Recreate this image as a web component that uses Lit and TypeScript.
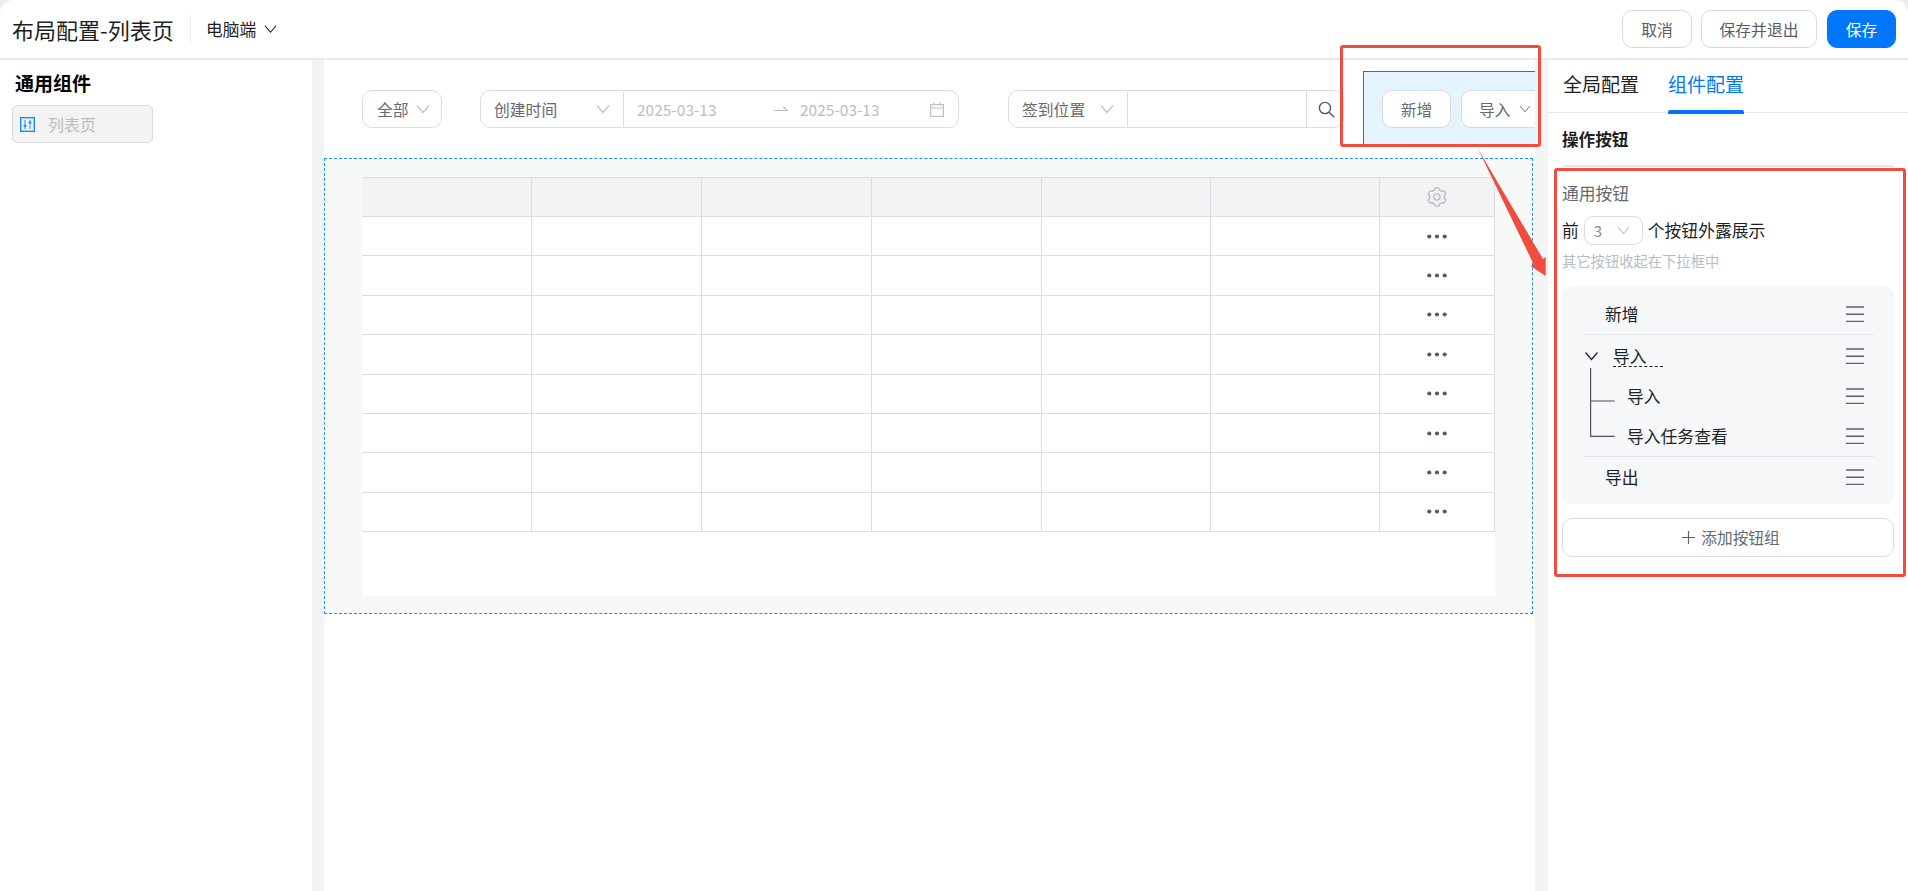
import { LitElement, html, css, svg } from "lit";
import { customElement } from "lit/decorators.js";

const chevron = (cls = "chev") => html`<svg class=${cls} viewBox="0 0 14 10" fill="none" stroke="currentColor" stroke-width="1.2"><path d="M1 1.5 7 8.5 13 1.5"/></svg>`;
const burger = html`<svg class="burger" viewBox="0 0 18 16" fill="none" stroke="#5f626b" stroke-width="1.5"><path d="M0 1h18M0 8.3h18M0 15.5h18"/></svg>`;

function gearPath(): string {
  const pts: string[] = [];
  const p = (r: number, deg: number) => {
    const a = (deg * Math.PI) / 180;
    return `${(10 + r * Math.cos(a)).toFixed(2)} ${(10 + r * Math.sin(a)).toFixed(2)}`;
  };
  for (let i = 0; i < 6; i++) {
    const c = 30 + i * 60;
    pts.push(p(7.5, c - 19), p(9.3, c - 11), p(9.3, c + 11), p(7.5, c + 19));
  }
  return "M" + pts.join("L") + "Z";
}

@customElement("app-root")
export class AppRoot extends LitElement {
  static styles = css`
    :host { display: block; width: 1908px; height: 891px; font-family: "Noto Sans CJK SC", "Noto Sans", sans-serif; background: #eeeeef; color: #1c1f23; overflow: hidden; }
    * { box-sizing: border-box; }
    .page { position: relative; width: 1908px; height: 891px; background: #fff; border-radius: 14px 14px 0 0; overflow: hidden; display: flex; flex-direction: column; }
    .top { height: 60px; flex: none; border-bottom: 2px solid #e8e9ec; display: flex; align-items: center; padding: 0 12px; }
    .title { font-size: 22px; width: 178px; line-height: 30px; white-space: nowrap; }
    .tsep { width: 1px; height: 28px; background: #eceef0; margin-right: 15px; }
    .device { font-size: 16.8px; display: flex; align-items: center; gap: 8px; line-height: 24px; }
    .device .chev { width: 13px; height: 10px; color: #1c1f23; }
    .spacer { flex: 1; }
    .btn { height: 38px; border: 1px solid #d9dadf; border-radius: 10px; background: #fff; font-size: 15.8px; color: #5a5d65; display: flex; align-items: center; justify-content: center; }
    .b1 { width: 70px; margin-right: 9px; }
    .b2 { width: 116px; margin-right: 10px; }
    .b3 { width: 69px; background: #0077fa; border-color: #0077fa; color: #fff; }
    .body { flex: 1; display: flex; min-height: 0; }
    .left { width: 312px; flex: none; padding: 9px 12px 0; }
    .left h3 { margin: 0 0 0 3px; font-size: 19px; line-height: 28px; font-weight: 700; color: #000; }
    .widget { margin-top: 8px; width: 141px; height: 38px; background: #f3f3f4; border: 1px solid #dcdde1; border-radius: 5px; display: flex; align-items: center; padding-left: 7px; gap: 13px; font-size: 16px; color: #bdbdbd; }
    .widget svg { width: 15px; height: 15px; }
    .gutter { flex: none; background: #f2f3f5; }
    .g1 { width: 12px; }
    .g2 { width: 13px; }
    .center { width: 1211px; flex: none; overflow: hidden; }
    .bar { height: 98px; display: flex; align-items: flex-start; padding-left: 38px; white-space: nowrap; }
    .ctl { margin-top: 30px; height: 38px; border: 1px solid #dcdde1; border-radius: 10px; background: #fff; display: flex; align-items: center; font-size: 15.8px; color: #666970; flex: none; }
    .ctl .chev { width: 14px; height: 10px; color: #bfc1c6; flex: none; }
    .all { width: 80px; padding: 0 0 0 14px; gap: 7px; margin-right: 38px; }
    .date { width: 479px; margin-right: 49px; }
    .seg { height: 100%; display: flex; align-items: center; border-right: 1px solid #dcdde1; flex: none; }
    .date .seg { width: 143px; padding: 0 13px 0 13px; justify-content: space-between; }
    .dt { font-size: 15.5px; color: #bcbdc1; width: 81px; }
    .d1 { margin-left: 13px; }
    .dash { width: 14px; height: 6px; margin: 0 12px 0 56px; color: #bcbdc1; flex: none; }
    .cal { width: 14px; height: 15px; color: #bfc1c6; margin-left: 49px; flex: none; }
    .sign { width: 336px; margin-right: 19px; }
    .sign .seg1 { width: 119px; padding: 0 13px; justify-content: space-between; }
    .sign .seg2 { width: 179px; }
    .sbtn { flex: 1; display: flex; align-items: center; padding-left: 11px; }
    .sbtn svg { width: 17px; height: 17px; }
    .ops { flex: none; width: 300px; height: 76px; margin-top: 11px; background: #e3f4fe; border-top: 1px solid #1677e0; border-left: 1px solid #1677e0; display: flex; align-items: flex-start; padding: 18px 0 0 18px; gap: 10px; }
    .ops .btn { height: 38px; font-size: 15.8px; color: #666970; flex: none; }
    .ops .add { width: 69px; }
    .ops .imp { width: 85px; gap: 8px; justify-content: flex-start; padding-left: 17px; }
    .ops .chev { width: 12px; height: 8px; color: #666970; }
    .canvas { width: 1209px; height: 456px; border: 1px dashed #1890ff; background: #f7f9f9; padding: 18px 37px 17px 37px; }
    .table { background: #fff; height: 419px; }
    .row { display: grid; grid-template-columns: 170px 170px 169.5px 170px 169px 169.5px 115px; height: 39.4px; border-bottom: 1.5px solid #dcdde1; }
    .row.head { height: 40px; background: #f2f3f5; border-top: 1.5px solid #dcdde1; }
    .row > div { border-right: 1px solid #dcdde1; display: flex; align-items: center; justify-content: center; }
    .gear { width: 20px; height: 20px; }
    .dots { width: 20px; height: 5px; }
    .right { width: 360px; flex: none; }
    .tabs { height: 53px; border-bottom: 1px solid #e8e9ec; display: flex; padding: 0 0 0 15px; gap: 29px; font-size: 19px; }
    .tab { height: 53px; line-height: 47px; position: relative; }
    .tab.on { color: #0077fa; }
    .tab.on::after { content: ""; position: absolute; left: 0; right: 0; bottom: -1px; height: 4px; border-radius: 2px 2px 0 0; background: #0077fa; }
    .rbody { padding: 0 14px; }
    .rh { height: 54px; border-bottom: 2px solid #e8e9ec; font-size: 16.6px; font-weight: 700; line-height: 52px; padding-left: 0; color: #1c1f23; }
    .sub { font-size: 16.8px; color: #666970; margin: 13px 0 0 0; line-height: 26px; }
    .fore { display: flex; align-items: center; margin: 10px 0 0 0; font-size: 16.8px; line-height: 29px; height: 29px; }
    .sel3 { width: 59px; height: 29px; margin: 0 5px 0 5px; border: 1px solid #dcdde1; border-radius: 9px; display: flex; align-items: center; padding-left: 9px; gap: 15px; color: #888b92; font-size: 15px; }
    .sel3 .chev { width: 13px; height: 9px; color: #bfc1c6; }
    .hint { font-size: 14.3px; color: #b8bcc4; margin: 7px 0 0 0; line-height: 18px; }
    .list { margin-top: 16px; height: 218px; border-radius: 9px; background: #f6f7f9; padding: 8px 20px 0 22px; font-size: 16.8px; }
    .item { display: flex; align-items: center; justify-content: space-between; height: 40px; padding-right: 10px; }
    .item svg.burger { width: 18px; height: 16px; flex: none; }
    .item .t { padding-left: 21px; }
    .group { border-top: 1px solid #e4e5e8; border-bottom: 1px solid #e4e5e8; height: 123px; position: relative; }
    .group .item { height: 40px; }
    .group .gi { height: 41px; }
    .gh { display: flex; align-items: center; }
    .gh .chev { width: 15px; height: 10px; color: #1c1f23; margin-right: 14px; }
    .gh span { border-bottom: 1px dashed #1c1f23; width: 50px; line-height: 20px; margin-top: 2px; }
    .child { padding-left: 43px; }
    .tree { position: absolute; left: 6px; top: 33px; width: 25px; height: 69px; pointer-events: none; }
    .addg { margin-top: 14px; height: 39px; border: 1px solid #dcdde1; border-radius: 10px; display: flex; align-items: center; justify-content: center; gap: 6px; padding-left: 6px; font-size: 15.7px; color: #666970; }
    .addg svg { width: 13px; height: 13px; }
    .mark { position: absolute; border: 3px solid #f14c40; border-radius: 3px; pointer-events: none; }
    .m1 { left: 1340px; top: 45px; width: 201px; height: 102px; }
    .m2 { left: 1554px; top: 168px; width: 352px; height: 409px; }
    .arrow { position: absolute; left: 1470px; top: 145px; width: 90px; height: 140px; pointer-events: none; }
  `;

  render() {
    const rows = Array.from({ length: 8 });
    return html`<div class="page">
      <div class="top">
        <div class="title">布局配置-列表页</div>
        <div class="tsep"></div>
        <div class="device">电脑端 ${chevron()}</div>
        <div class="spacer"></div>
        <div class="btn b1">取消</div>
        <div class="btn b2">保存并退出</div>
        <div class="btn b3">保存</div>
      </div>
      <div class="body">
        <div class="left">
          <h3>通用组件</h3>
          <div class="widget">
            <svg viewBox="0 0 15 15" fill="none" stroke="#1a8cff" stroke-width="1.4"><rect x=".7" y=".7" width="13.6" height="13.6"/><path d="M5 3v9M10 3v9" stroke-width="1"/><path d="M3.6 8.8h2.8M8.6 5.6h2.8" stroke-width="2"/></svg>
            列表页
          </div>
        </div>
        <div class="gutter g1"></div>
        <div class="center">
          <div class="bar">
            <div class="ctl all">全部 ${chevron()}</div>
            <div class="ctl date">
              <div class="seg">创建时间 ${chevron()}</div>
              <span class="dt d1">2025-03-13</span>
              <svg class="dash" viewBox="0 0 14 6" fill="none" stroke="currentColor" stroke-width="1.2"><path d="M0 4.5h14M9 1l4 3"/></svg>
              <span class="dt">2025-03-13</span>
              <svg class="cal" viewBox="0 0 14 15" fill="none" stroke="currentColor" stroke-width="1.2"><rect x=".6" y="2.6" width="12.8" height="11.8"/><path d="M.6 6h12.8M4 .5v3M10 .5v3"/></svg>
            </div>
            <div class="ctl sign">
              <div class="seg seg1">签到位置 ${chevron()}</div>
              <div class="seg seg2"></div>
              <div class="sbtn"><svg viewBox="0 0 17 17" fill="none" stroke="#55585f" stroke-width="1.4"><circle cx="7" cy="7" r="5.6"/><path d="m11.2 11.2 5 5"/></svg></div>
            </div>
            <div class="ops">
              <div class="btn add">新增</div>
              <div class="btn imp">导入 ${chevron()}</div>
            </div>
          </div>
          <div class="canvas">
            <div class="table">
              <div class="row head">
                <div></div><div></div><div></div><div></div><div></div><div></div>
                <div><svg class="gear" viewBox="0 0 20 20" fill="none" stroke="#b9bbc0" stroke-width="1.4" stroke-linejoin="round">${svg`<path d=${gearPath()}/><circle cx="10" cy="10" r="3.1"/>`}</svg></div>
              </div>
              ${rows.map(() => html`<div class="row">
                <div></div><div></div><div></div><div></div><div></div><div></div>
                <div><svg class="dots" viewBox="0 0 20 5" fill="#565b66"><circle cx="2.3" cy="2.5" r="2.1"/><circle cx="10" cy="2.5" r="2.1"/><circle cx="17.7" cy="2.5" r="2.1"/></svg></div>
              </div>`)}
            </div>
          </div>
        </div>
        <div class="gutter g2"></div>
        <div class="right">
          <div class="tabs"><div class="tab">全局配置</div><div class="tab on">组件配置</div></div>
          <div class="rbody">
            <div class="rh">操作按钮</div>
            <div class="sub">通用按钮</div>
            <div class="fore">前<div class="sel3">3 ${chevron()}</div>个按钮外露展示</div>
            <div class="hint">其它按钮收起在下拉框中</div>
            <div class="list">
              <div class="item"><span class="t">新增</span>${burger}</div>
              <div class="group">
                <div class="item gi"><div class="gh">${chevron()}<span>导入</span></div>${burger}</div>
                <div class="item"><span class="child">导入</span>${burger}</div>
                <div class="item"><span class="child">导入任务查看</span>${burger}</div>
                <svg class="tree" viewBox="0 0 25 69" fill="none" stroke="#4e5158" stroke-width="1.2"><path d="M.6 0v68.4H24.6M.6 33h24"/></svg>
              </div>
              <div class="item"><span class="t">导出</span>${burger}</div>
            </div>
            <div class="addg"><svg viewBox="0 0 13 13" fill="none" stroke="#5f626b" stroke-width="1.2"><path d="M6.5 0v13M0 6.5h13"/></svg>添加按钮组</div>
          </div>
        </div>
      </div>
      <div class="mark m1"></div>
      <div class="mark m2"></div>
      <svg class="arrow" viewBox="0 0 90 140">${svg`<path fill="#f14c40" d="M8 4 73 114 75.7 112 75.7 131 60.7 121 63.5 119Z"/>`}</svg>
    </div>`;
  }
}
